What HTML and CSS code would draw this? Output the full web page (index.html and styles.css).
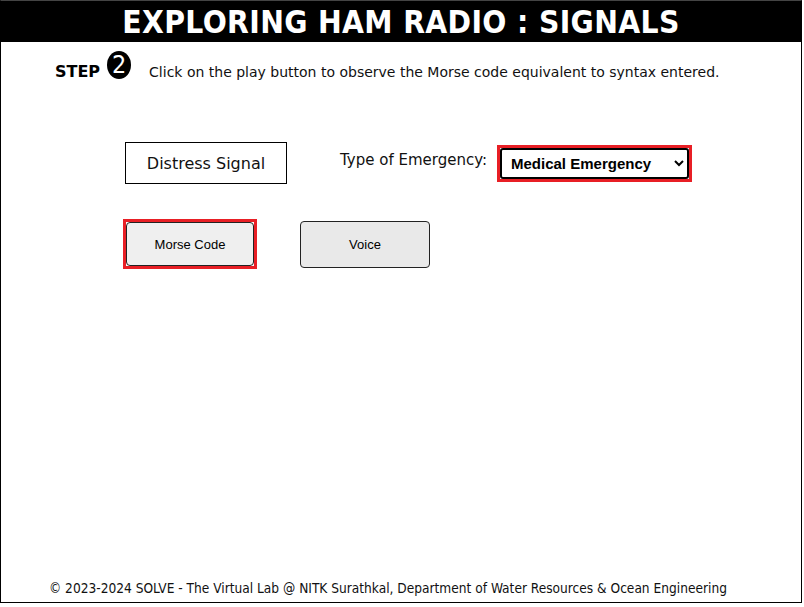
FILE: index.html
```html
<!DOCTYPE html>
<html>
<head>
<meta charset="utf-8">
<link rel="stylesheet" href="styles.css">
</head>
<body>
<div class="frame">
  <header class="header"><h1 class="title">EXPLORING HAM RADIO : SIGNALS</h1></header>
  <div class="step">
    <span class="step-label">STEP</span>
    <span class="step-num">2</span>
    <span class="step-text">Click on the play button to observe the Morse code equivalent to syntax entered.</span>
  </div>
  <div class="row row-top">
    <div class="signal-box">Distress Signal</div>
    <label class="type-label" for="etype">Type of Emergency:</label>
    <span class="highlight">
      <select id="etype" class="type-select">
        <option>Medical Emergency</option>
        <option>Fire Emergency</option>
      </select>
    </span>
  </div>
  <div class="row row-buttons">
    <span class="highlight"><button class="btn btn-active">Morse Code</button></span>
    <button class="btn btn-voice">Voice</button>
  </div>
  <footer class="footer">© 2023-2024 SOLVE - The Virtual Lab @ NITK Surathkal, Department of Water Resources &amp; Ocean Engineering</footer>
</div>
</body>
</html>
```
FILE: styles.css
```css
html, body {
  margin: 0;
  padding: 0;
  background: #fff;
}
.frame {
  box-sizing: border-box;
  width: 802px;
  height: 603px;
  border: 1px solid #000;
  border-top: 1px solid #444;
  display: flex;
  flex-direction: column;
  font-family: "DejaVu Sans", sans-serif;
  color: #111;
}
.header {
  background: #000;
  height: 41px;
  flex: none;
  display: flex;
  align-items: center;
  justify-content: center;
}
.title {
  margin: 0;
  color: #fff;
  font-family: "DejaVu Sans Condensed", "DejaVu Sans", sans-serif;
  font-weight: bold;
  font-size: 31.5px;
  letter-spacing: 0.35px;
}
.step {
  display: flex;
  align-items: flex-start;
  padding: 9px 0 0 54px;
  height: 30px;
  flex: none;
}
.step-label {
  font-weight: bold;
  font-size: 16px;
  color: #000;
  margin-top: 11px;
}
.step-num {
  width: 24px;
  height: 28px;
  border-radius: 50%;
  background: #000;
  color: #fff;
  font-family: "DejaVu Sans Condensed", "DejaVu Sans", sans-serif;
  font-size: 25px;
  line-height: 28px;
  display: flex;
  align-items: center;
  justify-content: center;
  margin-left: 7px;
}
.step-text {
  font-size: 14px;
  margin-left: 18px;
  margin-top: 13px;
}
.row {
  display: flex;
  align-items: center;
  flex: none;
}
.row-top {
  margin-top: 61px;
  padding-left: 124px;
}
.signal-box {
  box-sizing: border-box;
  width: 162px;
  height: 42px;
  border: 1px solid #000;
  display: flex;
  align-items: center;
  justify-content: center;
  font-size: 16px;
}
.type-label {
  margin-left: 53px;
  font-size: 15px;
  position: relative;
  top: -3px;
}
.highlight {
  display: inline-flex;
  border: 3px solid #e81f25;
}
.row-top .highlight {
  margin-left: 10px;
}
.type-select {
  box-sizing: border-box;
  margin: 0;
  width: 189px;
  height: 31px;
  border: 2px solid #000;
  border-radius: 3px;
  font-family: "Liberation Sans", Arial, sans-serif;
  font-weight: bold;
  font-size: 15px;
  color: #000;
  background: #fff;
  padding-left: 5px;
}
.row-buttons {
  margin-top: 35px;
  padding-left: 122px;
}
.btn {
  box-sizing: border-box;
  margin: 0;
  border: 1px solid #222;
  border-radius: 4px;
  background: #e9e9e9;
  font-family: "Liberation Sans", Arial, sans-serif;
  font-size: 13px;
  color: #000;
}
.btn-active {
  width: 128px;
  height: 44px;
  background: #efefef;
}
.btn-voice {
  width: 130px;
  height: 47px;
  margin-left: 43px;
}
.footer {
  margin-top: auto;
  padding: 0 0 6px 48px;
  font-family: "DejaVu Sans Condensed", "DejaVu Sans", sans-serif;
  font-size: 13.6px;
  color: #111;
}
```
